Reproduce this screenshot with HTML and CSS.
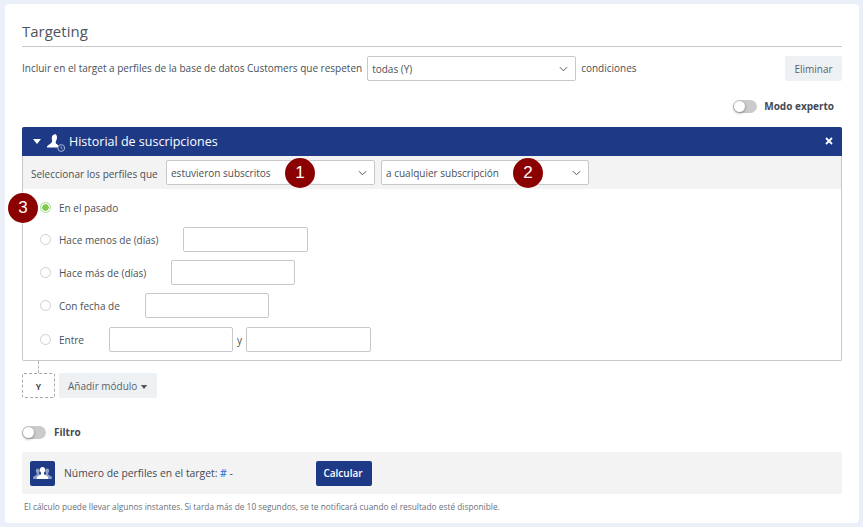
FILE: index.html
```html
<!DOCTYPE html>
<html lang="es">
<head>
    <meta charset="UTF-8">
    <meta name="viewport" content="width=device-width, initial-scale=1.0">
    <title>Targeting</title>
    <link rel="stylesheet" href="styles.css">
</head>
<body>
    <div class="card">
        <h2 class="title">Targeting</h2>

        <div class="include-row">
            <span class="include-text">Incluir en el target a perfiles de la base de datos Customers que respeten</span>
            <div class="select select-all">
                <span>todas (Y)</span>
                <svg class="chevron" viewBox="0 0 10 6"><path d="M1 1l4 4 4-4"/></svg>
            </div>
            <span class="include-text">condiciones</span>
            <button class="btn btn-delete">Eliminar</button>
        </div>

        <div class="expert-row">
            <span class="toggle"></span>
            <span class="toggle-label">Modo experto</span>
        </div>

        <div class="module">
            <div class="module-head">
                <svg class="caret" viewBox="0 0 8 5"><path d="M0 0h8L4 5z"/></svg>
                <svg class="history-icon" viewBox="0 0 20 20">
                    <path fill="#fff" d="M8.500 1c1.700 0 2.500 1.300 2.500 3.200 0 1.600-.5 3-1.200 3.900v2.400c.7.600 1.500 1 2.200 1.400v2.600H1v-1.300c1.300-1.300 3-2.200 4.500-3.500.8-1 .6-2.400.4-3.600-.3-1.500.2-4.600 2.600-4.600z"/>
                    <circle cx="15.200" cy="15" r="3.400" fill="#1e3a87" stroke="#a9b6d6"/>
                    <path d="M15.200 13v2.200l1.300.8" fill="none" stroke="#a9b6d6" stroke-width=".8"/>
                </svg>
                <span class="module-title">Historial de suscripciones</span>
                <svg class="close" viewBox="0 0 8 8"><path d="M1 1l6 6M7 1L1 7"/></svg>
            </div>
            <div class="module-filter">
                <span class="filter-label">Seleccionar los perfiles que</span>
                <div class="select select-state">
                    <span>estuvieron subscritos</span>
                    <svg class="chevron" viewBox="0 0 10 6"><path d="M1 1l4 4 4-4"/></svg>
                </div>
                <div class="select select-sub">
                    <span>a cualquier subscripción</span>
                    <svg class="chevron" viewBox="0 0 10 6"><path d="M1 1l4 4 4-4"/></svg>
                </div>
            </div>
            <div class="options">
                <div class="option option-first">
                    <span class="radio radio-on"></span>
                    <span>En el pasado</span>
                </div>
                <div class="option">
                    <span class="radio"></span>
                    <span>Hace menos de (días)</span>
                    <input class="field field-wide" type="text">
                </div>
                <div class="option">
                    <span class="radio"></span>
                    <span>Hace más de (días)</span>
                    <input class="field" type="text">
                </div>
                <div class="option option-date">
                    <span class="radio"></span>
                    <span>Con fecha de</span>
                    <input class="field" type="text">
                </div>
                <div class="option">
                    <span class="radio"></span>
                    <span>Entre</span>
                    <input class="field" type="text">
                    <span class="and">y</span>
                    <input class="field field-wide" type="text">
                </div>
            </div>
            <span class="badge badge-1">1</span>
            <span class="badge badge-2">2</span>
            <span class="badge badge-3">3</span>
        </div>

        <div class="add-row">
            <span class="connector"></span>
            <span class="logic">Y</span>
            <button class="btn btn-add">Añadir módulo <svg class="add-caret" viewBox="0 0 8 5"><path d="M0 0h8L4 5z"/></svg></button>
        </div>

        <div class="filter-row">
            <span class="toggle"></span>
            <span class="toggle-label">Filtro</span>
        </div>

        <div class="count-bar">
            <span class="count-icon">
                <svg viewBox="0 0 20 14">
                    <path fill="#8f9fc8" d="M5 1.500c1.400 0 2.200 1 2.200 2.400 0 1-.4 2-1 2.500v1L8 8.500 4.500 11v2H0v-2.500l3.800-2.100v-2c-.6-.5-1-1.500-1-2.500 0-1.400.8-2.400 2.200-2.400zM15 1.500c1.400 0 2.200 1 2.200 2.400 0 1-.4 2-1 2.500v2l3.800 2.100V13h-4.500v-2L12 8.500l1.800-1.100v-1c-.6-.5-1-1.500-1-2.500 0-1.400.8-2.400 2.200-2.400z"/>
                    <path fill="#fff" d="M10 0c1.800 0 2.800 1.300 2.800 3 0 1.300-.5 2.500-1.200 3.200v1.700L16 10.400V13H4v-2.600l4.400-2.500V6.200C7.700 5.500 7.200 4.300 7.200 3 7.200 1.300 8.200 0 10 0z"/>
                </svg>
            </span>
            <span class="count-text">Número de perfiles en el target: <span class="hash">#</span> -</span>
            <button class="btn btn-calc">Calcular</button>
        </div>

        <p class="note">El cálculo puede llevar algunos instantes. Si tarda más de 10 segundos, se te notificará cuando el resultado esté disponible.</p>
    </div>
</body>
</html>
```

FILE: styles.css
```css
* {
    box-sizing: border-box;
}
body {
    margin: 0;
    padding: 4px 4px 4px 5px;
    height: 527px;
    overflow: hidden;
    background: #ebf0f8;
    font-family: "Open Sans", Arial, sans-serif;
    font-size: 10px;
    color: #4a4f57;
}
.card {
    height: 519px;
    padding: 17px 17px 0 17px;
    background: #fff;
    border-radius: 4px;
}
.title {
    margin: 0;
    height: 26px;
    border-bottom: 1px solid #c8c8c8;
    font-size: 15px;
    font-weight: 400;
    line-height: 20px;
    color: #4e5560;
}
.include-row {
    display: flex;
    align-items: center;
    margin-top: 9px;
    height: 25px;
}
.include-text {
    padding-bottom: 2px;
}
.select {
    display: flex;
    align-items: center;
    justify-content: space-between;
    height: 25px;
    padding: 0 7px 0 4px;
    background: #fff;
    border: 1px solid #c8c8c8;
    border-radius: 2px;
}
.select-all {
    width: 209px;
    margin: 0 5px;
}
.chevron {
    width: 9px;
    height: 6px;
    fill: none;
    stroke: #555;
    stroke-width: 1.1;
}
.btn {
    border: none;
    border-radius: 2px;
    font-family: inherit;
    font-size: 10px;
}
.btn-delete {
    width: 57px;
    height: 25px;
    margin-left: auto;
    padding: 0;
    background: #eef1f4;
    color: #5a5f66;
}
.expert-row {
    display: flex;
    align-items: center;
    justify-content: flex-end;
    gap: 7px;
    height: 14px;
    margin-top: 18px;
    padding-right: 8px;
}
.toggle {
    position: relative;
    width: 24px;
    height: 13px;
    background: #cbcbcb;
    border-radius: 7px;
}
.toggle::before {
    content: "";
    position: absolute;
    top: 1px;
    left: 1px;
    width: 11px;
    height: 11px;
    background: #fff;
    border-radius: 50%;
    box-shadow: 0 1px 3px rgba(0, 0, 0, 0.4);
}
.toggle-label {
    font-weight: 700;
    color: #434a54;
}
.module {
    position: relative;
    margin-top: 14px;
    height: 234px;
    border: 1px solid #c8c8c8;
    border-top: none;
    border-radius: 2px;
}
.module-head {
    display: flex;
    align-items: center;
    height: 29px;
    margin: 0 -1px;
    padding: 0 9px 0 11px;
    background: #1e3a87;
    border-radius: 2px 2px 0 0;
    color: #fff;
}
.caret {
    width: 8px;
    height: 5px;
    fill: #fff;
}
.history-icon {
    width: 20px;
    height: 20px;
    margin: 2px 0 0 5px;
}
.module-title {
    margin: 0 0 1px 3px;
    font-size: 12.5px;
}
.close {
    width: 8px;
    height: 8px;
    margin: 0 0 2px auto;
    stroke: #fff;
    stroke-width: 1.8;
}
.module-filter {
    display: flex;
    align-items: center;
    height: 33px;
    padding-left: 8px;
    background: #f3f3f3;
}
.filter-label {
    width: 135px;
    padding-top: 3px;
}
.select-state {
    width: 209px;
}
.select-sub {
    width: 208px;
    margin-left: 6px;
}
.options {
    padding: 9px 0 0 17px;
}
.option {
    display: flex;
    align-items: center;
    height: 25px;
    margin-bottom: 8px;
}
.option-first {
    height: 19px;
    margin-bottom: 10px;
}
.option-date {
    margin-bottom: 9px;
}
.radio {
    width: 11px;
    height: 11px;
    margin-right: 8px;
    border: 1px solid #cfcfcf;
    border-radius: 50%;
    background: #fff;
}
.radio-on {
    border-color: #a8d98a;
    background: radial-gradient(circle, #7fc94f 0 3px, #fff 3.5px);
}
.field {
    width: 124px;
    height: 25px;
    margin-left: 25px;
    border: 1px solid #c8c8c8;
    border-radius: 2px;
    background: #fff;
}
.field-wide {
    width: 125px;
    margin-left: 24px;
}
.and {
    margin: 0 0 0 4px;
    width: 9px;
}
.and + .field {
    margin-left: 0;
}
.badge {
    position: absolute;
    width: 30px;
    height: 30px;
    background: #8b0000;
    border-radius: 50%;
    box-shadow: 0 0 2px rgba(255, 255, 255, 0.8);
    color: #fff;
    font-family: "Liberation Sans", Arial, sans-serif;
    font-size: 17px;
    line-height: 30px;
    text-align: center;
}
.badge-1 {
    top: 31px;
    left: 262px;
}
.badge-2 {
    top: 31px;
    left: 490px;
}
.badge-3 {
    top: 66px;
    left: -15px;
}
.add-row {
    position: relative;
    display: flex;
    gap: 4px;
    margin-top: 12px;
}
.connector {
    position: absolute;
    top: -12px;
    left: 16px;
    height: 12px;
    border-left: 1px dashed #b5b5b5;
}
.logic {
    width: 33px;
    height: 25px;
    border: 1px dashed #a8a8a8;
    border-radius: 2px;
    font-size: 8.5px;
    font-weight: 700;
    line-height: 25px;
    text-align: center;
    color: #434a54;
}
.btn-add {
    width: 98px;
    height: 25px;
    padding: 0;
    background: #eef1f4;
    color: #5a5f66;
}
.add-caret {
    width: 8px;
    height: 4px;
    fill: #555;
    vertical-align: middle;
}
.filter-row {
    display: flex;
    align-items: center;
    gap: 8px;
    height: 14px;
    margin-top: 27px;
}
.count-bar {
    display: flex;
    align-items: center;
    height: 42px;
    margin-top: 13px;
    padding-left: 8px;
    background: #f3f3f3;
    border-radius: 2px;
}
.count-icon {
    display: flex;
    align-items: center;
    justify-content: center;
    width: 25px;
    height: 25px;
    background: #1e3a87;
    border-radius: 2px;
}
.count-icon svg {
    width: 19px;
    height: 13px;
}
.count-text {
    width: 252px;
    margin-left: 9px;
    font-size: 10.35px;
    color: #434a54;
}
.hash {
    color: #3d7edb;
    font-weight: 600;
}
.btn-calc {
    width: 56px;
    height: 25px;
    padding: 0 2px 0 0;
    background: #1e3a87;
    color: #fff;
    font-weight: 600;
}
.note {
    margin: 7px 0 0 2px;
    font-size: 8.33px;
    line-height: 11px;
    color: #6a7078;
}
```
